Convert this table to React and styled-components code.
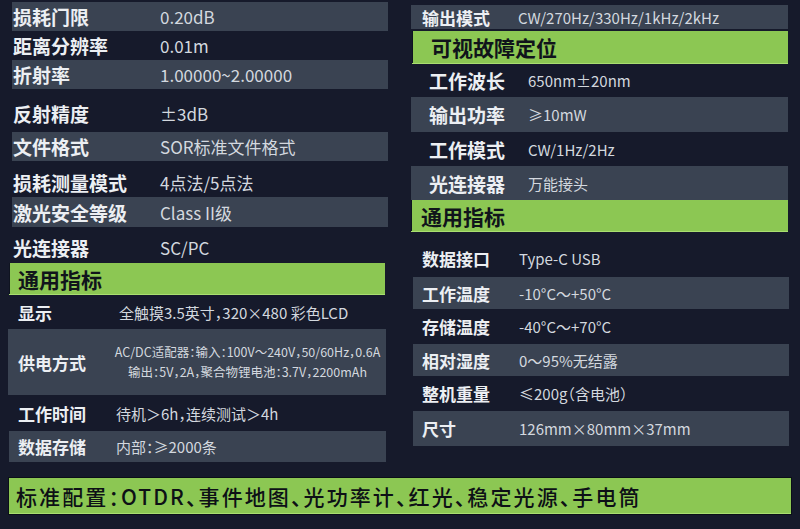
import React from 'react';
import styled, { createGlobalStyle } from 'styled-components';

const Global = createGlobalStyle`
  html, body {
    margin: 0;
    padding: 0;
    background: #161a2b;
  }
  * { box-sizing: border-box; }
`;

const FONT = `"Noto Sans CJK SC", "Noto Sans", sans-serif`;

const Page = styled.div`
  width: 800px;
  height: 529px;
  background: #161a2b;
  font-family: ${FONT};
  overflow: hidden;
`;

const Columns = styled.div`
  display: grid;
  grid-template-columns: 400px 400px;
  align-items: start;
`;

const Column = styled.div`
  display: flex;
  flex-direction: column;
  padding-left: ${p => p.$pl}px;
`;

const Row = styled.div`
  display: flex;
  align-items: center;
  height: ${p => p.$h}px;
  margin-top: ${p => p.$mt || 0}px;
  margin-left: ${p => p.$ml || 0}px;
  width: ${p => p.$w}px;
  background: ${p => (p.$shade ? '#3a4352' : 'transparent')};
`;

const Label = styled.div`
  flex: 0 0 ${p => p.$lw}px;
  padding-left: ${p => p.$pl}px;
  font-size: ${p => p.$fs}px;
  font-weight: 700;
  color: #eceff3;
  white-space: nowrap;
  line-height: 1;
`;

const Value = styled.div`
  flex: 1;
  font-size: ${p => p.$fs}px;
  font-weight: 400;
  color: #d3d8df;
  white-space: nowrap;
  line-height: 1;
  font-feature-settings: "halt";
`;

const MultiValue = styled.div`
  flex: 1;
  display: flex;
  flex-direction: column;
  align-items: center;
  gap: 6px;
  font-size: 12.5px;
  color: #d3d8df;
  white-space: nowrap;
  line-height: 1.1;
  font-feature-settings: "halt";
  padding-right: 4px;
`;

const Heading = styled.div`
  display: flex;
  align-items: center;
  height: ${p => p.$h}px;
  margin-top: ${p => p.$mt || 0}px;
  margin-left: ${p => p.$ml || 0}px;
  width: ${p => p.$w}px;
  padding-left: ${p => p.$pl}px;
  background: #8cc753;
  box-shadow: inset 0 -1px 0 #a9df70, inset 1px 0 0 #0f1420;
  font-size: 21px;
  font-weight: 700;
  color: #10141b;
  line-height: 1;
`;

const Footer = styled.div`
  margin: 15px 8px 0;
  height: 38px;
  display: flex;
  align-items: center;
  padding-left: 7px;
  background: #8cc753;
  border: 1px solid #0b0f18;
  box-shadow: inset 0 -1px 0 #a9df70;
  font-size: 21px;
  font-weight: 500;
  letter-spacing: 2.1px;
  color: #0d1016;
  font-feature-settings: "halt";
  white-space: nowrap;
`;

const leftTop = [
  ['损耗门限', '0.20dB', true, 2, 29],
  ['距离分辨率', '0.01m', false, 0, 29],
  ['折射率', '1.00000~2.00000', true, 0, 29],
  ['反射精度', '±3dB', false, 9, 30],
  ['文件格式', 'SOR标准文件格式', true, 4, 29],
  ['损耗测量模式', '4点法/5点法', false, 7, 29],
  ['激光安全等级', 'Class II级', true, 0, 30],
  ['光连接器', 'SC/PC', false, 5, 30],
];

const laser = [
  ['工作波长', '650nm±20nm', false, 33],
  ['输出功率', '≥10mW', true, 35],
  ['工作模式', 'CW/1Hz/2Hz', false, 34],
  ['光连接器', '万能接头', true, 34],
];

const general = [
  ['数据接口', 'Type-C USB', false, 10, 32],
  ['工作温度', '-10°C～+50°C', true, 3, 32],
  ['存储温度', '-40°C～+70°C', false, 0, 35],
  ['相对湿度', '0～95%无结露', true, 0, 32],
  ['整机重量', '≤200g（含电池）', false, 0, 35],
  ['尺寸', '126mm×80mm×37mm', true, 0, 35],
];

export default function App() {
  return (
    <Page>
      <Global />
      <Columns>
        <Column $pl={8}>
          {leftTop.map(([k, v, shade, mt, h]) => (
            <Row key={k} $shade={shade} $mt={mt} $h={h} $ml={4} $w={376}>
              <Label $lw={148} $pl={1} $fs={19}>{k}</Label>
              <Value $fs={17}>{v}</Value>
            </Row>
          ))}
          <Heading $mt={1} $h={32} $ml={1} $w={376} $pl={9}>通用指标</Heading>
          <Row $h={34} $ml={1} $w={377}>
            <Label $lw={110} $pl={9} $fs={17}>显示</Label>
            <Value $fs={15}>全触摸3.5英寸，320×480 彩色LCD</Value>
          </Row>
          <Row $shade $h={66} $w={378}>
            <Label $lw={105} $pl={10} $fs={17}>供电方式</Label>
            <MultiValue>
              <span>AC/DC适配器：输入：100V～240V，50/60Hz，0.6A</span>
              <span>输出：5V，2A，聚合物锂电池：3.7V，2200mAh</span>
            </MultiValue>
          </Row>
          <Row $h={36} $ml={1} $w={377}>
            <Label $lw={107} $pl={9} $fs={17}>工作时间</Label>
            <Value $fs={15}>待机＞6h，连续测试＞4h</Value>
          </Row>
          <Row $shade $h={31} $ml={1} $w={377}>
            <Label $lw={107} $pl={9} $fs={17}>数据存储</Label>
            <Value $fs={15}>内部：≥2000条</Value>
          </Row>
        </Column>

        <Column $pl={11}>
          <Row $shade $mt={5} $h={24} $w={377}>
            <Label $lw={107} $pl={11} $fs={17}>输出模式</Label>
            <Value $fs={15}>CW/270Hz/330Hz/1kHz/2kHz</Value>
          </Row>
          <Heading $mt={2} $h={33} $ml={1} $w={376} $pl={19}>可视故障定位</Heading>
          {laser.map(([k, v, shade, h]) => (
            <Row key={k} $shade={shade} $h={h} $w={377}>
              <Label $lw={117} $pl={18} $fs={19}>{k}</Label>
              <Value $fs={15}>{v}</Value>
            </Row>
          ))}
          <Heading $h={32} $w={377} $pl={10}>通用指标</Heading>
          {general.map(([k, v, shade, mt, h]) => (
            <Row key={k} $shade={shade} $mt={mt} $h={h} $ml={2} $w={376}>
              <Label $lw={106} $pl={9} $fs={17}>{k}</Label>
              <Value $fs={15}>{v}</Value>
            </Row>
          ))}
        </Column>
      </Columns>
      <Footer>标准配置：OTDR、事件地图、光功率计、红光、稳定光源、手电筒</Footer>
    </Page>
  );
}
